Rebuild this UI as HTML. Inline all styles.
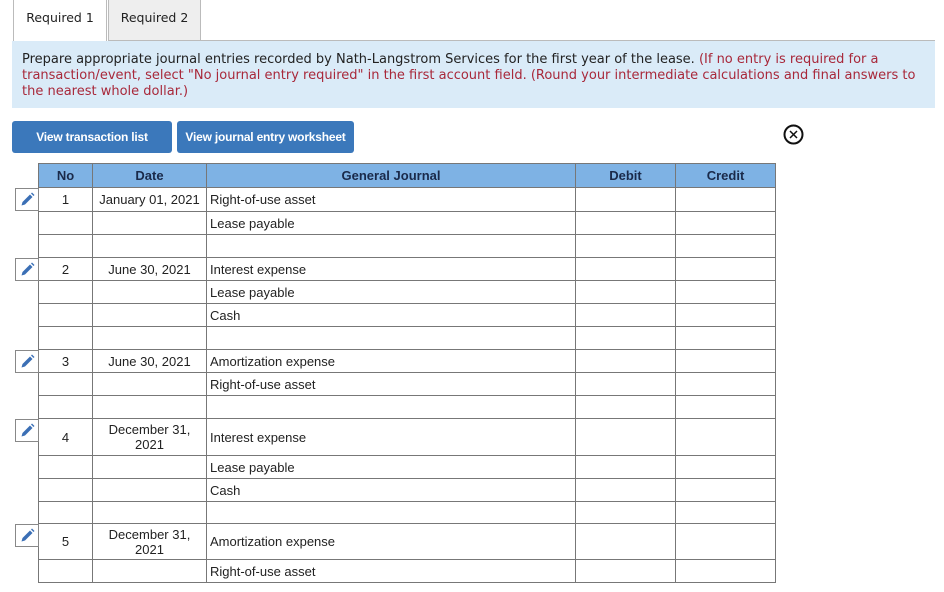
<!DOCTYPE html>
<html><head><meta charset="utf-8">
<style>
*{box-sizing:border-box;margin:0;padding:0}
body{width:944px;height:592px;background:#fff;position:relative;overflow:hidden;font-family:"Liberation Sans",Arial,sans-serif;color:#222}
.tab{position:absolute;top:0;height:41px;font:12.5px "DejaVu Sans",Verdana,sans-serif;line-height:36px;text-align:center;color:#222}
.t1{left:13px;width:94px;background:#fff;border:1px solid #bbb;border-bottom:none;border-top:none;height:42px}
.t2{left:108px;width:93px;background:#eee;border:1px solid #bbb;border-top:none}
.tabline{position:absolute;left:201px;right:9px;top:40px;height:1px;background:#bbb}
.info{position:absolute;left:12px;top:41px;width:923px;height:67px;background:#daebf8;padding:11px 10px;font:13px "DejaVu Sans",Verdana,sans-serif;line-height:16px;color:#222;white-space:nowrap}
.info span{color:#a8283a}
.btn{position:absolute;top:121px;height:32px;background:#3b78bb;color:#fff;font-weight:bold;font-size:12px;letter-spacing:-0.2px;line-height:32px;text-align:center;border-radius:3px;white-space:nowrap}
table{position:absolute;left:38px;top:163px;border-collapse:collapse;font-size:13px}
td,th{border:1px solid #777;padding:0 3px}
th{background:#7eb2e4;height:24px;font-weight:bold;color:#1a2a4a}
td.c{text-align:center}
.pen{position:absolute;left:15px;width:24px;height:23px;border:1px solid #888;background:#fff}
.pen svg{position:absolute;left:4px;top:3px}
</style></head><body>
<div class="tab t1">Required 1</div>
<div class="tab t2">Required 2</div>
<div class="tabline"></div>
<div class="info">Prepare appropriate journal entries recorded by Nath-Langstrom Services for the first year of the lease. <span>(If no entry is required for a</span><br><span>transaction/event, select "No journal entry required" in the first account field. (Round your intermediate calculations and final answers to</span><br><span>the nearest whole dollar.)</span></div>
<div class="btn" style="left:12px;width:160px">View transaction list</div>
<div class="btn" style="left:177px;width:177px">View journal entry worksheet</div>
<svg style="position:absolute;left:783px;top:124px" width="21" height="21" viewBox="0 0 21 21"><circle cx="10.5" cy="10.5" r="9" fill="none" stroke="#111" stroke-width="2"/><path d="M7 7L14 14M14 7L7 14" stroke="#111" stroke-width="1.5"/></svg>
<table>
<colgroup><col style="width:54px"><col style="width:114px"><col style="width:369px"><col style="width:100px"><col style="width:100px"></colgroup>
<tr><th>No</th><th>Date</th><th>General Journal</th><th>Debit</th><th>Credit</th></tr>
<tr style="height:24px"><td class="c">1</td><td class="c">January 01, 2021</td><td>Right-of-use asset</td><td></td><td></td></tr>
<tr style="height:23px"><td></td><td></td><td>Lease payable</td><td></td><td></td></tr>
<tr style="height:23px"><td></td><td></td><td></td><td></td><td></td></tr>
<tr style="height:23px"><td class="c">2</td><td class="c">June 30, 2021</td><td>Interest expense</td><td></td><td></td></tr>
<tr style="height:23px"><td></td><td></td><td>Lease payable</td><td></td><td></td></tr>
<tr style="height:23px"><td></td><td></td><td>Cash</td><td></td><td></td></tr>
<tr style="height:23px"><td></td><td></td><td></td><td></td><td></td></tr>
<tr style="height:23px"><td class="c">3</td><td class="c">June 30, 2021</td><td>Amortization expense</td><td></td><td></td></tr>
<tr style="height:23px"><td></td><td></td><td>Right-of-use asset</td><td></td><td></td></tr>
<tr style="height:23px"><td></td><td></td><td></td><td></td><td></td></tr>
<tr style="height:37px"><td class="c">4</td><td class="c" style="line-height:15px">December 31,<br>2021</td><td>Interest expense</td><td></td><td></td></tr>
<tr style="height:23px"><td></td><td></td><td>Lease payable</td><td></td><td></td></tr>
<tr style="height:23px"><td></td><td></td><td>Cash</td><td></td><td></td></tr>
<tr style="height:22px"><td></td><td></td><td></td><td></td><td></td></tr>
<tr style="height:36px"><td class="c">5</td><td class="c" style="line-height:15px">December 31,<br>2021</td><td>Amortization expense</td><td></td><td></td></tr>
<tr style="height:23px"><td></td><td></td><td>Right-of-use asset</td><td></td><td></td></tr>
</table>
<div class="pen" style="top:188px"><svg width="15" height="15" viewBox="0 0 15 15"><path d="M1.5 13.5L2.5 10L10 2.5L12.5 5L5 12.5Z" fill="#3b6fb5"/><path d="M11 1.5L12 0.5L14.5 3L13.5 4Z" fill="#3b6fb5"/></svg></div>
<div class="pen" style="top:258px"><svg width="15" height="15" viewBox="0 0 15 15"><path d="M1.5 13.5L2.5 10L10 2.5L12.5 5L5 12.5Z" fill="#3b6fb5"/><path d="M11 1.5L12 0.5L14.5 3L13.5 4Z" fill="#3b6fb5"/></svg></div>
<div class="pen" style="top:350px"><svg width="15" height="15" viewBox="0 0 15 15"><path d="M1.5 13.5L2.5 10L10 2.5L12.5 5L5 12.5Z" fill="#3b6fb5"/><path d="M11 1.5L12 0.5L14.5 3L13.5 4Z" fill="#3b6fb5"/></svg></div>
<div class="pen" style="top:419px"><svg width="15" height="15" viewBox="0 0 15 15"><path d="M1.5 13.5L2.5 10L10 2.5L12.5 5L5 12.5Z" fill="#3b6fb5"/><path d="M11 1.5L12 0.5L14.5 3L13.5 4Z" fill="#3b6fb5"/></svg></div>
<div class="pen" style="top:524px"><svg width="15" height="15" viewBox="0 0 15 15"><path d="M1.5 13.5L2.5 10L10 2.5L12.5 5L5 12.5Z" fill="#3b6fb5"/><path d="M11 1.5L12 0.5L14.5 3L13.5 4Z" fill="#3b6fb5"/></svg></div>
</body></html>
